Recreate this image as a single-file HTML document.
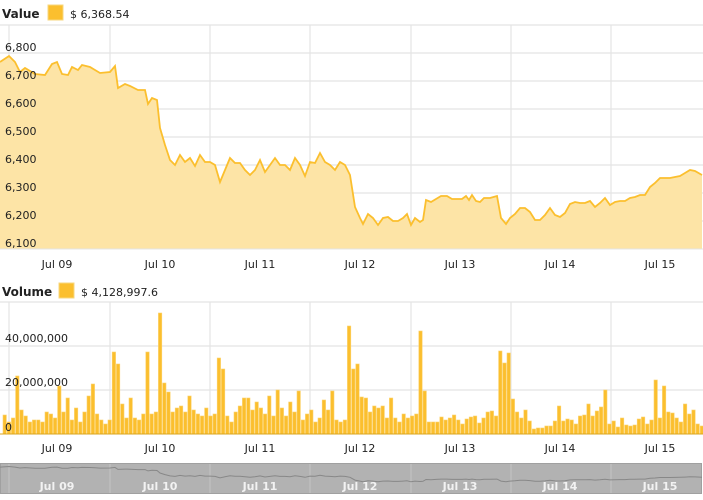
<!DOCTYPE html>
<html><head><meta charset="utf-8"><style>
html,body{margin:0;padding:0;background:#fff;width:703px;height:500px;overflow:hidden;font-family:"Liberation Sans",Verdana,sans-serif}
svg text{font-family:"DejaVu Sans","Liberation Sans",sans-serif;font-size:11px;fill:#222}
</style></head><body>
<svg width="703" height="500" xmlns="http://www.w3.org/2000/svg">
<text x="2" y="18" style="font-weight:bold;font-size:12px">Value</text>
<rect x="48" y="5" width="15" height="15" fill="#fbbf2e" stroke="#f7d77f"/>
<text x="70" y="18">$ 6,368.54</text>
<g stroke="#e4e4e4" stroke-width="1.2">
<line x1="0" y1="25" x2="703" y2="25"/>
<line x1="0" y1="53" x2="703" y2="53"/><line x1="0" y1="81" x2="703" y2="81"/>
<line x1="0" y1="109" x2="703" y2="109"/><line x1="0" y1="137" x2="703" y2="137"/>
<line x1="0" y1="165" x2="703" y2="165"/><line x1="0" y1="193" x2="703" y2="193"/>
<line x1="0" y1="221" x2="703" y2="221"/>
<line x1="9" y1="25" x2="9" y2="249"/><line x1="110" y1="25" x2="110" y2="249"/>
<line x1="210" y1="25" x2="210" y2="249"/><line x1="310" y1="25" x2="310" y2="249"/>
<line x1="411" y1="25" x2="411" y2="249"/><line x1="511" y1="25" x2="511" y2="249"/>
<line x1="611" y1="25" x2="611" y2="249"/>
</g>
<polygon id="pa" fill="#fde4a6" stroke="none"/>
<polyline id="pl" fill="none" stroke="#fbbf2e" stroke-width="1.8"/>
<g>
<text x="5" y="51">6,800</text><text x="5" y="79">6,700</text><text x="5" y="107">6,600</text>
<text x="5" y="135">6,500</text><text x="5" y="163">6,400</text><text x="5" y="191">6,300</text>
<text x="5" y="219">6,200</text><text x="5" y="247">6,100</text>
</g>
<line x1="0" y1="249" x2="703" y2="249" stroke="#e4e4e4"/>
<g text-anchor="middle">
<text x="57" y="268">Jul 09</text><text x="160" y="268">Jul 10</text><text x="260" y="268">Jul 11</text>
<text x="360" y="268">Jul 12</text><text x="460" y="268">Jul 13</text><text x="560" y="268">Jul 14</text><text x="660" y="268">Jul 15</text>
</g>
<text x="2" y="296" style="font-weight:bold;font-size:12px">Volume</text>
<rect x="59" y="283" width="15" height="15" fill="#fbbf2e" stroke="#f7d77f"/>
<text x="81" y="296">$ 4,128,997.6</text>
<g stroke="#e4e4e4" stroke-width="1.2">
<line x1="0" y1="302" x2="703" y2="302"/><line x1="0" y1="346" x2="703" y2="346"/><line x1="0" y1="390" x2="703" y2="390"/>
<line x1="9" y1="302" x2="9" y2="434"/><line x1="110" y1="302" x2="110" y2="434"/>
<line x1="210" y1="302" x2="210" y2="434"/><line x1="310" y1="302" x2="310" y2="434"/>
<line x1="411" y1="302" x2="411" y2="434"/><line x1="511" y1="302" x2="511" y2="434"/>
<line x1="611" y1="302" x2="611" y2="434"/>
</g>
<g id="bars" fill="#fbbf2e" stroke="#fcd36e" stroke-width="0.6" transform="translate(0,434) scale(1,-1)">
<rect x="3" y="0" width="3.4" height="19"/><rect x="7.2" y="0" width="3.4" height="12"/><rect x="11.4" y="0" width="3.4" height="16"/><rect x="15.6" y="0" width="3.4" height="58"/><rect x="19.8" y="0" width="3.4" height="24"/><rect x="24" y="0" width="3.4" height="18"/><rect x="28.2" y="0" width="3.4" height="12"/><rect x="32.4" y="0" width="3.4" height="14"/><rect x="36.6" y="0" width="3.4" height="14"/><rect x="40.8" y="0" width="3.4" height="12"/>
<rect x="45" y="0" width="3.4" height="22"/><rect x="49.2" y="0" width="3.4" height="20"/><rect x="53.4" y="0" width="3.4" height="16"/><rect x="57.6" y="0" width="3.4" height="48"/><rect x="61.8" y="0" width="3.4" height="22"/><rect x="66" y="0" width="3.4" height="36"/><rect x="70.2" y="0" width="3.4" height="14"/><rect x="74.4" y="0" width="3.4" height="26"/><rect x="78.6" y="0" width="3.4" height="12"/><rect x="82.8" y="0" width="3.4" height="22"/>
<rect x="87" y="0" width="3.4" height="38"/><rect x="91.2" y="0" width="3.4" height="50"/><rect x="95.4" y="0" width="3.4" height="20"/><rect x="99.6" y="0" width="3.4" height="14"/><rect x="103.8" y="0" width="3.4" height="10"/><rect x="108" y="0" width="3.4" height="14"/><rect x="112.2" y="0" width="3.4" height="82"/><rect x="116.4" y="0" width="3.4" height="70"/><rect x="120.6" y="0" width="3.4" height="30"/><rect x="124.8" y="0" width="3.4" height="16"/>
<rect x="129" y="0" width="3.4" height="36"/><rect x="133.2" y="0" width="3.4" height="16"/><rect x="137.4" y="0" width="3.4" height="14"/><rect x="141.6" y="0" width="3.4" height="20"/><rect x="145.8" y="0" width="3.4" height="82"/><rect x="150" y="0" width="3.4" height="20"/><rect x="154.2" y="0" width="3.4" height="22"/><rect x="158.4" y="0" width="3.4" height="121"/><rect x="162.6" y="0" width="3.4" height="51"/><rect x="166.8" y="0" width="3.4" height="42"/>
<rect x="171" y="0" width="3.4" height="22"/><rect x="175.2" y="0" width="3.4" height="26"/><rect x="179.4" y="0" width="3.4" height="28"/><rect x="183.6" y="0" width="3.4" height="22"/><rect x="187.8" y="0" width="3.4" height="38"/><rect x="192" y="0" width="3.4" height="24"/><rect x="196.2" y="0" width="3.4" height="20"/><rect x="200.4" y="0" width="3.4" height="18"/><rect x="204.6" y="0" width="3.4" height="26"/><rect x="208.8" y="0" width="3.4" height="18"/>
<rect x="213" y="0" width="3.4" height="20"/><rect x="217.2" y="0" width="3.4" height="76"/><rect x="221.4" y="0" width="3.4" height="65"/><rect x="225.6" y="0" width="3.4" height="18"/><rect x="229.8" y="0" width="3.4" height="12"/><rect x="234" y="0" width="3.4" height="22"/><rect x="238.2" y="0" width="3.4" height="28"/><rect x="242.4" y="0" width="3.4" height="36"/><rect x="246.6" y="0" width="3.4" height="36"/><rect x="250.8" y="0" width="3.4" height="24"/>
<rect x="255" y="0" width="3.4" height="32"/><rect x="259.2" y="0" width="3.4" height="26"/><rect x="263.4" y="0" width="3.4" height="20"/><rect x="267.6" y="0" width="3.4" height="38"/><rect x="271.8" y="0" width="3.4" height="18"/><rect x="276" y="0" width="3.4" height="44"/><rect x="280.2" y="0" width="3.4" height="26"/><rect x="284.4" y="0" width="3.4" height="18"/><rect x="288.6" y="0" width="3.4" height="32"/><rect x="292.8" y="0" width="3.4" height="22"/>
<rect x="297" y="0" width="3.4" height="43"/><rect x="301.2" y="0" width="3.4" height="14"/><rect x="305.4" y="0" width="3.4" height="20"/><rect x="309.6" y="0" width="3.4" height="24"/><rect x="313.8" y="0" width="3.4" height="12"/><rect x="318" y="0" width="3.4" height="16"/><rect x="322.2" y="0" width="3.4" height="34"/><rect x="326.4" y="0" width="3.4" height="24"/><rect x="330.6" y="0" width="3.4" height="43"/><rect x="334.8" y="0" width="3.4" height="14"/>
<rect x="339" y="0" width="3.4" height="12"/><rect x="343.2" y="0" width="3.4" height="14"/><rect x="347.4" y="0" width="3.4" height="108"/><rect x="351.6" y="0" width="3.4" height="65"/><rect x="355.8" y="0" width="3.4" height="70"/><rect x="360" y="0" width="3.4" height="37"/><rect x="364.2" y="0" width="3.4" height="36"/><rect x="368.4" y="0" width="3.4" height="22"/><rect x="372.6" y="0" width="3.4" height="28"/><rect x="376.8" y="0" width="3.4" height="26"/>
<rect x="381" y="0" width="3.4" height="28"/><rect x="385.2" y="0" width="3.4" height="16"/><rect x="389.4" y="0" width="3.4" height="36"/><rect x="393.6" y="0" width="3.4" height="16"/><rect x="397.8" y="0" width="3.4" height="12"/><rect x="402" y="0" width="3.4" height="20"/><rect x="406.2" y="0" width="3.4" height="16"/><rect x="410.4" y="0" width="3.4" height="18"/><rect x="414.6" y="0" width="3.4" height="20"/><rect x="418.8" y="0" width="3.4" height="103"/>
<rect x="423" y="0" width="3.4" height="43"/><rect x="427.2" y="0" width="3.4" height="12"/><rect x="431.4" y="0" width="3.4" height="12"/><rect x="435.6" y="0" width="3.4" height="12"/><rect x="439.8" y="0" width="3.4" height="17"/><rect x="444" y="0" width="3.4" height="14"/><rect x="448.2" y="0" width="3.4" height="16"/><rect x="452.4" y="0" width="3.4" height="19"/><rect x="456.6" y="0" width="3.4" height="14"/><rect x="460.8" y="0" width="3.4" height="10"/>
<rect x="465" y="0" width="3.4" height="15"/><rect x="469.2" y="0" width="3.4" height="17"/><rect x="473.4" y="0" width="3.4" height="18"/><rect x="477.6" y="0" width="3.4" height="11"/><rect x="481.8" y="0" width="3.4" height="16"/><rect x="486" y="0" width="3.4" height="22"/><rect x="490.2" y="0" width="3.4" height="23"/><rect x="494.4" y="0" width="3.4" height="18"/><rect x="498.6" y="0" width="3.4" height="83"/><rect x="502.8" y="0" width="3.4" height="71"/>
<rect x="507" y="0" width="3.4" height="81"/><rect x="511.2" y="0" width="3.4" height="35"/><rect x="515.4" y="0" width="3.4" height="22"/><rect x="519.6" y="0" width="3.4" height="16"/><rect x="523.8" y="0" width="3.4" height="24"/><rect x="528" y="0" width="3.4" height="13"/><rect x="532.2" y="0" width="3.4" height="5"/><rect x="536.4" y="0" width="3.4" height="6"/><rect x="540.6" y="0" width="3.4" height="6"/><rect x="544.8" y="0" width="3.4" height="8"/>
<rect x="549" y="0" width="3.4" height="8"/><rect x="553.2" y="0" width="3.4" height="13"/><rect x="557.4" y="0" width="3.4" height="28"/><rect x="561.6" y="0" width="3.4" height="13"/><rect x="565.8" y="0" width="3.4" height="15"/><rect x="570" y="0" width="3.4" height="14"/><rect x="574.2" y="0" width="3.4" height="10"/><rect x="578.4" y="0" width="3.4" height="18"/><rect x="582.6" y="0" width="3.4" height="19"/><rect x="586.8" y="0" width="3.4" height="30"/>
<rect x="591" y="0" width="3.4" height="18"/><rect x="595.2" y="0" width="3.4" height="23"/><rect x="599.4" y="0" width="3.4" height="27"/><rect x="603.6" y="0" width="3.4" height="44"/><rect x="607.8" y="0" width="3.4" height="10"/><rect x="612" y="0" width="3.4" height="13"/><rect x="616.2" y="0" width="3.4" height="7"/><rect x="620.4" y="0" width="3.4" height="16"/><rect x="624.6" y="0" width="3.4" height="9"/><rect x="628.8" y="0" width="3.4" height="8"/>
<rect x="633" y="0" width="3.4" height="9"/><rect x="637.2" y="0" width="3.4" height="15"/><rect x="641.4" y="0" width="3.4" height="17"/><rect x="645.6" y="0" width="3.4" height="10"/><rect x="649.8" y="0" width="3.4" height="14"/><rect x="654" y="0" width="3.4" height="54"/><rect x="658.2" y="0" width="3.4" height="16"/><rect x="662.4" y="0" width="3.4" height="48"/><rect x="666.6" y="0" width="3.4" height="22"/><rect x="670.8" y="0" width="3.4" height="21"/>
<rect x="675" y="0" width="3.4" height="16"/><rect x="679.2" y="0" width="3.4" height="12"/><rect x="683.4" y="0" width="3.4" height="30"/><rect x="687.6" y="0" width="3.4" height="20"/><rect x="691.8" y="0" width="3.4" height="24"/><rect x="696" y="0" width="3.4" height="10"/><rect x="700.2" y="0" width="3.4" height="8"/>
</g>
<line x1="0" y1="434" x2="703" y2="434" stroke="#d9a520" stroke-width="1"/>
<text x="5" y="342">40,000,000</text><text x="5" y="386">20,000,000</text><text x="5" y="431">0</text>
<g text-anchor="middle">
<text x="57" y="452">Jul 09</text><text x="160" y="452">Jul 10</text><text x="260" y="452">Jul 11</text>
<text x="360" y="452">Jul 12</text><text x="460" y="452">Jul 13</text><text x="560" y="452">Jul 14</text><text x="660" y="452">Jul 15</text>
</g>
<rect x="0.5" y="463.5" width="701" height="30" fill="#b2b2b2" stroke="#a0a0a0"/>
<g stroke="#c4c4c4"><line x1="9" y1="464" x2="9" y2="493"/><line x1="110" y1="464" x2="110" y2="493"/><line x1="210" y1="464" x2="210" y2="493"/><line x1="310" y1="464" x2="310" y2="493"/><line x1="411" y1="464" x2="411" y2="493"/><line x1="511" y1="464" x2="511" y2="493"/><line x1="611" y1="464" x2="611" y2="493"/></g>
<polyline id="nl" fill="none" stroke="#888" stroke-width="1"/>
<g text-anchor="middle" style="font-weight:bold">
<text x="57" y="490" style="fill:#f2f2f2">Jul 09</text><text x="160" y="490" style="fill:#f2f2f2">Jul 10</text><text x="260" y="490" style="fill:#f2f2f2">Jul 11</text>
<text x="360" y="490" style="fill:#f2f2f2">Jul 12</text><text x="460" y="490" style="fill:#f2f2f2">Jul 13</text><text x="560" y="490" style="fill:#f2f2f2">Jul 14</text><text x="660" y="490" style="fill:#f2f2f2">Jul 15</text>
</g>
</svg>
<script>
var p=[0,62,9,56,15,62,20,72,25,68,35,74,45,75,52,64,57,62,62,74,68,75,72,67,78,70,82,65,90,67,95,70,100,73,110,72,115,66,118,88,125,84,130,86,138,90,145,90,148,104,152,98,157,100,160,128,165,145,170,160,175,165,180,155,185,162,190,158,195,166,200,155,205,162,210,162,215,165,220,182,225,170,230,158,235,163,240,163,245,170,250,175,255,170,260,160,265,172,270,165,275,158,280,165,285,165,290,170,295,158,300,165,305,176,310,162,315,163,320,153,325,162,330,165,335,170,340,162,345,165,350,175,355,207,360,218,363,224,368,214,373,218,378,225,383,218,388,217,393,221,398,221,403,218,407,214,411,225,415,218,420,222,423,220,426,200,431,202,436,199,441,196,447,196,452,199,457,199,462,199,466,196,469,200,472,195,476,201,480,202,484,198,490,198,497,196,501,218,506,224,510,218,515,214,520,208,525,208,530,212,535,220,540,220,545,215,550,208,555,215,560,217,565,213,570,204,575,202,580,203,585,203,590,201,595,207,600,203,605,198,610,205,615,202,620,201,625,201,630,198,635,197,640,195,645,195,650,187,655,183,660,178,665,178,670,178,675,177,680,176,685,173,690,170,695,171,702,175];
var s="",n="";for(var i=0;i<p.length;i+=2){s+=p[i]+","+p[i+1]+" ";n+=p[i]+","+(466+(p[i+1]-50)*0.09).toFixed(1)+" ";}
document.getElementById('pl').setAttribute('points',s);
document.getElementById('pa').setAttribute('points',s+"702,249 0,249");
document.getElementById('nl').setAttribute('points',n);
</script>
</body></html>
